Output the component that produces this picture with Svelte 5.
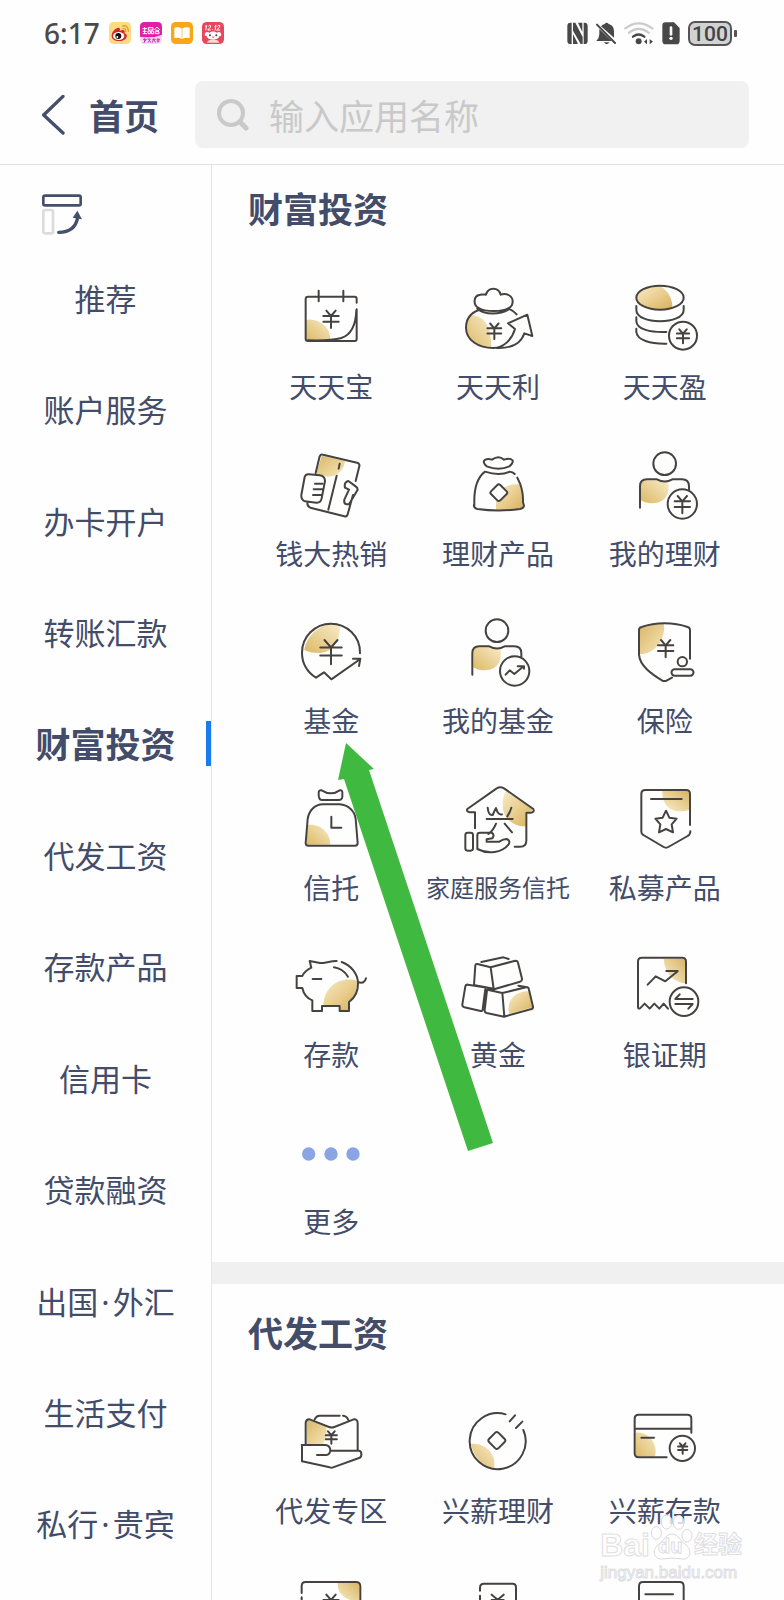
<script>
  const circle = (x, y, r) => `M${x - r} ${y}a${r} ${r} 0 1 0 ${2 * r} 0a${r} ${r} 0 1 0 ${-2 * r} 0`;
  const yen = (x, y, k) =>
    `M${x - 14 * k} ${y - 25 * k}L${x} ${y - 9 * k}L${x + 14 * k} ${y - 25 * k}` +
    `M${x - 23 * k} ${y - 9 * k}h${46 * k}M${x - 23 * k} ${y + 8 * k}h${46 * k}M${x} ${y - 9 * k}v${36 * k}`;

  const nav = ['推荐', '账户服务', '办卡开户', '转账汇款', '财富投资', '代发工资', '存款产品', '信用卡', '贷款融资', '出国·外汇', '生活支付', '私行·贵宾'];
  let active = $state('财富投资');
  let query = $state('');

  const wealth = [
    { label: '天天宝', at: '154 51', tone: 'bl',
      gold: 'M199 180Q215 176 235 184Q272 200 272 241L199 241z',
      line: 'M351 128V116Q351 110 345 110H205Q198 110 198 117V237Q198 243 205 243H345Q351 243 351 237V148M237 92V124M311 92V124M205 241Q275 243 305 234Q348 220 350 150' + yen(274, 177, 1) },
    { label: '天天利', at: '654 51', tone: 'bl',
      gold: 'M690 168C720 160 757 190 753 260C725 264 680 245 678 203C678 190 683 175 690 168z',
      line: 'M716 144C700 136 698 108 720 104C728 102 735 104 738 104C744 80 776 80 782 104C800 98 818 108 818 124C818 134 812 142 806 144C790 156 734 156 716 144M712 146C735 166 780 164 806 148M716 150C690 160 678 180 678 203C678 240 715 264 760 264C790 264 815 240 825 207L804 190L862 164L877 228L853 220C845 245 820 266 770 264M806 146Q820 152 830 163' + yen(763, 213, 0.9) },
    { label: '天天盈', at: '254 51', tone: 'br',
      gold: 'M290 113C290 90 330 78 360 79C385 93 397 120 396 143C370 152 290 150 290 113z',
      line: 'M288 113a71 36 0 1 0 142 0a71 36 0 1 0 -142 0M288 138V150C288 195 430 195 430 150V138M288 172V184C290 208 330 218 378 216M288 206V216C290 240 330 252 378 251' + circle(428, 227, 42) + yen(428, 228, 0.8) },
    { label: '钱大热销', at: '154 553', tone: 'tl',
      gold: 'M246 588L316 604C312 640 280 655 256 650L230 642z',
      line: 'M228 640L240 590Q243 583 250 585L352 609Q361 612 359 620L348 664M340 706L324 764Q322 772 314 770L212 744Q203 741 203 730M195 652Q198 643 208 644L240 647Q256 650 256 664L246 716Q243 730 230 729L196 725Q184 720 185 706zM226 672H248M222 689H248M220 706H246M291 648L266 750M300 612L297 627M326 664Q312 668 316 684L328 690L314 720Q312 732 320 734H328L354 690Q354 684 348 680L326 664' },
    { label: '理财产品', at: '654 553', tone: 'br',
      gold: 'M768 750V724H778L802 700L790 685Q805 672 838 674Q850 705 848 745Q810 754 768 750z',
      line: 'M740 620Q725 606 736 600Q744 596 756 600Q776 586 792 600Q810 594 818 602Q820 612 808 620Q776 634 740 620M703 738V730C702 690 710 655 735 636C750 641 760 643 776 643C790 643 800 640 810 636Q818 636 824 643M832 654C846 680 850 705 849 728L852 738Q850 746 840 748Q776 757 712 748Q698 744 703 732M772 676Q776 672 781 676L800 695Q804 699 800 703L781 722Q776 726 772 722L753 703Q749 699 753 695z' },
    { label: '我的理财', at: '254 553', tone: 'bl',
      gold: 'M302 722V680Q302 662 320 662H350Q365 668 384 668Q386 690 382 702Q370 730 335 731Q315 731 302 722z',
      line: circle(373, 612, 34) + 'M299 744V680Q299 659 320 659H350Q373 672 396 659H425Q446 659 446 680V690' + circle(426, 733, 44) + yen(426, 734, 1) },
    { label: '基金', at: '154 65', tone: 'bl',
      gold: 'M194 182C200 140 240 105 276 105L300 110C303 150 280 190 240 191C220 191 205 188 194 182z',
      line: 'M361 192C363 140 320 103 274 103C225 103 187 143 187 190C187 222 203 248 229 265L253 249L275 270L362 209M340 208H362L358 230' + yen(274, 187, 1.4) },
    { label: '我的基金', at: '654 65', tone: 'bl',
      gold: 'M700 234V192Q700 174 718 174H748Q763 180 782 180Q784 202 780 214Q768 242 733 243Q713 243 700 234z',
      line: circle(771, 124, 34) + 'M697 256V192Q697 171 718 171H748Q771 184 794 171H823Q844 171 844 192V202' + circle(824, 245, 44) + 'M797 256L809 243L823 254L851 231M833 231H852V238' },
    { label: '保险', at: '254 65', tone: 'tl',
      gold: 'M299 194V122Q299 117 304 116Q335 104 371 103C376 150 345 194 299 194z',
      line: 'M449 208V122Q449 115 442 113C400 98 345 98 304 113Q296 115 296 122V195C298 230 335 255 366 274Q373 277 380 273L395 265' + yen(376, 177, 1) + circle(426, 217, 14) + 'M403 240H450a9 9 0 0 1 0 19H403a9 9 0 0 1 0 -19' },
    { label: '信托', at: '154 567', tone: 'bl',
      gold: 'M203 708C240 702 272 730 272 767L201 767z',
      line: 'M237 612Q237 602 246 604Q274 622 300 604Q310 602 308 616Q310 632 298 633H246Q236 632 237 612M198 762L204 690C208 665 225 646 250 646H300C325 648 345 665 348 690L354 762Q354 770 346 770H206Q198 770 198 762M275 683V716H305' },
    { label: '家庭服务信托', small: true, at: '654 567', tone: 'br',
      gold: 'M800 606L878 660L872 668H856V712C810 712 785 680 788 640Q790 615 800 606z',
      line: 'M705 718V670H690Q678 668 682 660L770 598Q781 592 792 598L880 660Q884 670 872 671H859V755Q859 773 840 773H824M743 656Q745 680 758 678Q764 664 768 657Q774 680 786 676M814 656Q810 670 802 682M740 690H818M768 704Q760 725 745 735M794 704L816 730M676 738Q676 731 683 731H692Q699 731 699 738V778Q699 785 692 785H683Q676 785 676 778zM712 738Q712 731 720 731H755Q765 738 757 748L740 751V758H778Q790 750 800 750Q812 755 806 766C785 792 745 797 712 780z' },
    { label: '私募产品', at: '254 567', tone: 'tr',
      gold: 'M366 606H437Q446 606 446 615V662C410 675 365 665 366 606z',
      line: 'M449 708V615Q449 603 437 603H315Q303 603 303 615V728Q303 735 309 738L370 774Q377 778 384 774L442 741Q450 737 450 727M332 630H424M377 665L387 686L409 689L394 706L398 730L377 720L356 730L360 706L345 689L367 686z' },
    { label: '存款', at: '154 77', tone: 'br',
      gold: 'M352 184C300 170 255 200 251 257H302V272H326V246Q354 225 352 184z',
      line: 'M291 125C270 125 255 132 241 131L210 125L215 145C200 153 192 160 188 170H171V206H188C192 225 205 238 218 243V275H247V260H300V275H328V248C345 235 356 215 355 190C354 165 335 138 306 128M355 188Q375 195 379 177M219 179H245M283 144Q310 148 325 172' },
    { label: '黄金', at: '654 77', tone: 'br',
      gold: 'M866 216L877 264L808 284C798 250 820 215 866 216z',
      line: 'M712 134L752 144L826 124Q833 124 834 130L846 178Q847 185 840 187L762 210L702 197L706 138Q707 133 712 134M752 144L761 209M724 128L790 114L806 119M733 204L684 196Q678 195 676 201L667 255Q666 262 673 264L722 275Q728 276 728 270L736 209M742 211L787 221L858 204Q866 203 867 211L879 262Q880 268 872 270L792 292L740 281Q733 279 734 272L741 213M787 221L793 292M835 199L862 204M705 198L765 209' },
    { label: '银证期', at: '254 77', tone: 'tr',
      gold: 'M370 118H425Q434 118 434 127V192Q418 190 398 178Q372 155 370 118z',
      line: 'M437 192V127Q437 115 425 115H304Q293 115 293 127V262Q293 270 299 267L313 253L328 268L342 253L357 268L370 253L383 268M322 196L346 171L375 186L412 156M378 155H412' + circle(431, 247, 43) + 'M457 239H405L418 225M405 254H457L444 268' },
    { label: '更多', at: '154 577', dots: circle(207, 703, 20) + circle(274, 703, 20) + circle(340, 703, 20) }
  ];

  const salary = [
    { label: '代发专区', at: '274 423', tone: 'tl',
      gold: 'M321 553V490Q322 480 330 481L380 500Q385 525 370 553z',
      line: 'M318 553V488Q320 477 330 478L388 501Q396 504 404 501L462 478Q474 477 474 490V570M345 478Q350 467 360 467H420M430 467Q442 468 446 480M306 555H378Q392 557 392 572Q390 584 380 585H352M394 572H478Q486 573 485 584Q485 592 478 594L400 622Q396 624 390 622L307 604V555' + yen(395, 532, 0.72) },
    { label: '兴薪理财', at: '774 423', tone: 'bl',
      gold: 'M812 552C850 545 892 580 882 624Q830 615 812 552z',
      line: 'M917 463A84 84 0 1 0 970 510M945 466L929 484M967 485L948 504M886 518Q890 514 895 518L914 537Q918 541 914 546L895 565Q890 569 886 565L867 546Q863 541 867 537z' },
    { label: '兴薪存款', at: '254 123', tone: 'bl',
      gold: 'M286 218C330 212 355 260 343 290H295Q286 290 286 280z',
      line: 'M453 218V176Q453 164 441 164H295Q283 164 283 176V280Q283 292 295 292H379M283 206H453M303 233H341' + circle(426, 265, 38) + yen(427, 265, 0.6) },
    { at: '274 925', tone: 'tr',
      gold: 'M414 970H468Q479 970 479 980V1030C440 1020 412 1005 414 970z',
      line: 'M306 1000V980Q306 967 318 967H468Q482 967 482 980V1090H306V1013' + yen(394, 1030, 1) },
    { at: '774 925', tone: 'br',
      gold: 'M900 1060H945V1090H890z',
      line: 'M840 993V984Q840 972 852 972H938Q948 972 948 984V1090H840V1008M875 1005L893 1020L911 1005M875 1021H911' },
    { at: '254 625', tone: 'br',
      gold: 'M390 740H427V790H380z',
      line: 'M296 790V680Q296 667 308 667H418Q430 667 430 680V790M315 704H398' }
  ];
</script>

{#snippet apps(items)}
  <div class="grid">
    {#each items as item}
      <button class="app" type="button">
        <svg class="pic" viewBox="{item.at} 240 240" aria-hidden="true">
          {#if item.dots}
            <path d={item.dots} fill="#89a5e4" />
          {:else}
            <path d={item.gold} fill="url(#gold-{item.tone})" />
            <path d={item.line} class="ink" />
          {/if}
        </svg>
        {#if item.label}<span class="name" class:small={item.small}>{item.label}</span>{/if}
      </button>
    {/each}
  </div>
{/snippet}

<div class="page">
  <svg class="defs" width="0" height="0" aria-hidden="true">
    <defs>
      <linearGradient id="gold-bl" x1="0" y1="1" x2="1" y2="0"><stop stop-color="#dcb965" /><stop offset="1" stop-color="#f8ebc8" /></linearGradient>
      <linearGradient id="gold-tl" x1="0" y1="0" x2="1" y2="1"><stop stop-color="#d9b668" /><stop offset="1" stop-color="#f8e7b8" /></linearGradient>
      <linearGradient id="gold-tr" x1="1" y1="0" x2="0" y2="1"><stop stop-color="#d8b568" /><stop offset="1" stop-color="#fbefcb" /></linearGradient>
      <linearGradient id="gold-br" x1="1" y1="1" x2="0" y2="0"><stop stop-color="#d9b25c" /><stop offset="1" stop-color="#f9ebc6" /></linearGradient>
    </defs>
  </svg>

  <div class="status">
    <div class="group left">
      <span class="time">6:17</span>
      <svg width="22" height="22" viewBox="0 0 66 66">
        <rect width="66" height="66" rx="14" fill="#fbdc83" />
        <path d="M8 42C8 27 25 14 31 18Q35 21 32 27Q44 20 47 28Q48 31 46 34Q55 37 53 44C49 62 8 62 8 42z" fill="#d8242c" />
        <ellipse cx="29" cy="42" rx="17" ry="12" fill="#fff" /><circle cx="28" cy="42" r="9" fill="#111" /><circle cx="25" cy="45" r="3" fill="#fff" />
        <path d="M41 12Q58 8 58 28M42 20Q51 18 50 28" fill="none" stroke="#e99b27" stroke-width="4" stroke-linecap="round" />
      </svg>
      <svg width="22" height="22" viewBox="0 0 66 66">
        <rect width="66" height="66" rx="14" fill="#f8d9ef" />
        <path d="M0 44V14Q0 0 14 0H52Q66 0 66 14V38Q40 50 0 44z" fill="#e01fa4" />
        <path d="M7 20H21M14 15V35M8 28H20M8 35H21M25 17H39V24H25zM24 27H31V35H24zM34 27H41V35H34zM51 15L43 24M51 15L60 24M46 25H57M46 29H57V35H46z" stroke="#fff" stroke-width="3" fill="none" />
        <path d="M9 52H19L11 62M14 49V62M22 51H31L24 62M26 52L33 62M37 52H47M42 49L37 62M42 54L47 62M50 52H60M50 57H59M54 49V62" stroke="#b93abb" stroke-width="3" fill="none" />
      </svg>
      <svg width="22" height="22" viewBox="0 0 66 66">
        <rect width="66" height="66" rx="14" fill="#f9a716" />
        <path d="M10 17Q23 14 33 20Q43 14 56 17V48Q43 45 33 51Q23 45 10 48z" fill="#fff" /><path d="M33 20V50" stroke="#efcf94" stroke-width="3" />
      </svg>
      <svg width="22" height="22" viewBox="0 0 66 66">
        <rect width="66" height="66" rx="14" fill="#e9475d" />
        <path d="M10 13L14 10L11 25M19 13Q22 8 26 11Q28 15 17 24H26M31 22V24M38 13L42 10L39 25M46 13Q49 8 54 11Q55 15 44 24H54" fill="none" stroke="#fff" stroke-width="3" />
        <path d="M8 36Q12 26 22 32Q33 25 45 32Q55 27 58 37Q59 43 52 43Q49 53 33 53Q17 53 14 43Q7 42 8 36z" fill="#fff" /><path d="M14 62Q20 50 33 54Q47 50 52 62z" fill="#ffd8d3" />
        <circle cx="24" cy="40" r="3" fill="#503038" /><circle cx="43" cy="40" r="3" fill="#503038" /><path d="M30 44Q33 49 37 44" fill="none" stroke="#e9475d" stroke-width="3" />
      </svg>
    </div>
    <div class="group right">
      <svg width="21" height="25" viewBox="528 62 63 75" fill="#484848">
        <path d="M542 67V131H538Q529 131 529 121V77Q529 67 538 67zM546 67H553L575 110V131H569L546 91zM546 102L560 128V131H546zM578 67H581Q590 67 590 77V121Q590 131 581 131H578zM561 67H574V95z" />
      </svg>
      <svg width="20" height="25" viewBox="614 62 60 75" fill="#484848">
        <path d="M629 78Q634 72 640 71Q646 63 652 71Q668 75 668 92V112zM624 86L661 122H615Q624 112 624 102zM637 126H655Q646 137 637 126z" /><path d="M617 73L671 128" stroke="#484848" stroke-width="6" stroke-linecap="round" />
      </svg>
      <svg width="30" height="25" viewBox="698 62 90 75" fill="none" stroke-width="7" stroke-linecap="round">
        <path d="M702 84Q742 54 783 84M713 97Q742 74 772 97" stroke="#cbcbcb" /><path d="M725 109Q742 96 759 109" stroke="#484848" /><circle cx="742" cy="123" r="9" fill="#484848" /><path d="M767 116V132L758 124zM775 116V132L785 124z" fill="#484848" />
      </svg>
      <svg width="18" height="25" viewBox="810 62 54 75">
        <path d="M820 66H846L863 83V121Q863 132 853 132H821Q811 132 811 121V76Q811 66 820 66z" fill="#484848" /><path d="M837 82V102" stroke="#fff" stroke-width="8" stroke-linecap="round" /><circle cx="837" cy="114" r="5" fill="#fff" />
      </svg>
      <div class="battery"><span class="level">100</span><span class="nub"></span></div>
    </div>
  </div>

  <header>
    <a class="back" href="#home">
      <svg width="24" height="40" viewBox="126 285 72 120" aria-hidden="true"><path d="M189 289L131 345L189 399" fill="none" stroke="#454e6b" stroke-width="10" stroke-linecap="round" stroke-linejoin="round" /></svg>
      <span>首页</span>
    </a>
    <label class="search">
      <svg width="32" height="32" viewBox="0 0 32 32" aria-hidden="true"><circle cx="14" cy="14" r="12" fill="none" stroke="#c9c9c9" stroke-width="4" /><path d="M23 23L29 29" stroke="#c9c9c9" stroke-width="5" stroke-linecap="round" /></svg>
      <input type="search" placeholder="输入应用名称" bind:value={query} />
    </label>
  </header>

  <div class="body">
    <nav>
      <button class="switch" type="button">
        <svg width="40" height="41" viewBox="126 582 120 123" fill="none" stroke-width="8" aria-hidden="true">
          <rect x="130" y="587" width="112" height="29" rx="5" stroke="#454e6b" /><rect x="130" y="630" width="29" height="70" rx="5" stroke="#dcdcdc" />
          <path d="M176 697Q226 697 233 652" stroke="#454e6b" stroke-width="10" stroke-linecap="round" /><path d="M232 632L246 658L218 653z" fill="#454e6b" stroke="none" />
        </svg>
      </button>
      <div class="items">
        {#each nav as item}
          <button type="button" class="item" class:active={item === active} onclick={() => (active = item)}>
            {#each item.split('·') as part, i}{#if i}<span class="dot">·</span>{/if}{part}{/each}
          </button>
        {/each}
      </div>
    </nav>

    <main>
      <section>
        <h2>财富投资</h2>
        {@render apps(wealth)}
        <svg class="pointer" width="157" height="410" viewBox="337 742 157 410" aria-hidden="true"><path d="M346 743L374 769L369 770L493 1143L468 1151L344 779L338 780z" fill="#40b940" /></svg>
      </section>
      <div class="divider"></div>
      <section>
        <h2>代发工资</h2>
        {@render apps(salary)}
      </section>
    </main>
  </div>

  <div class="mark">
    <div class="brand">
      <span>Bai</span>
      <span class="paw">
        <svg width="44" height="48" viewBox="0 0 132 144" fill="#fff" fill-opacity="0.8" stroke="#d9d9de" stroke-width="3" aria-hidden="true">
          <ellipse cx="19" cy="60" rx="15" ry="19" /><ellipse cx="50" cy="27" rx="16" ry="21" /><ellipse cx="86" cy="28" rx="16" ry="21" /><ellipse cx="111" cy="68" rx="15" ry="19" />
          <path d="M66 63C84 63 91 84 108 96C130 116 118 140 98 138Q66 132 36 138C12 140 4 112 24 96C41 84 48 63 66 63z" />
        </svg>
        <span class="du">du</span>
      </span>
      <span class="cn">经验</span>
    </div>
    <div class="site">jingyan.baidu.com</div>
  </div>
</div>

<style>
  :global(body) { margin: 0; background: #fff; }
  .page { position: relative; display: flex; flex-direction: column; height: 100vh; overflow: hidden; background: #fefefe; color: #434c69; font-family: "Noto Sans CJK SC", "Noto Sans", sans-serif; }
  .defs { position: absolute; }
  svg { display: block; flex: none; }
  button { padding: 0; border: 0; background: none; color: inherit; font: inherit; cursor: pointer; }

  .status { display: flex; justify-content: space-between; align-items: center; height: 65px; padding: 0 47px 0 44px; flex: none; }
  .group { display: flex; align-items: center; }
  .left { gap: 9px; }
  .right { gap: 8px; padding-top: 2px; }
  .time { font: 500 28px/32px "Noto Sans", sans-serif; color: #4a4a4a; }
  .battery { display: flex; align-items: center; gap: 2px; }
  .level { box-sizing: border-box; width: 44px; height: 25px; border: 2px solid #555; border-radius: 7px; background: #d2d2d2; color: #424242; font: 500 21px/22px Roboto, sans-serif; text-align: center; }
  .nub { width: 3px; height: 7px; border-radius: 1px; background: #555; }

  header { display: flex; align-items: center; gap: 36px; padding: 16px 35px 16px 42px; border-bottom: 1px solid #e2e2e4; flex: none; }
  .back { display: flex; align-items: center; gap: 23px; color: inherit; text-decoration: none; font-size: 35px; line-height: 48px; font-weight: 700; white-space: nowrap; }
  .search { display: flex; align-items: center; gap: 20px; flex: 1; min-width: 0; height: 67px; padding: 0 22px; box-sizing: border-box; border-radius: 8px; background: #f1f1f1; }
  input { flex: 1; min-width: 0; padding: 0; border: 0; outline: 0; background: none; color: inherit; font: 400 35px/48px "Noto Sans CJK SC", sans-serif; }
  input::placeholder { color: #c9c9c9; opacity: 1; }

  .body { display: flex; flex: 1; min-height: 0; }
  nav { box-sizing: border-box; display: flex; flex-direction: column; width: 212px; flex: none; padding-bottom: 21px; border-right: 1px solid #e6e6e8; overflow: auto; scrollbar-width: none; }
  .switch { display: flex; padding: 29px 42px 7px; flex: none; }
  .items { display: flex; flex-direction: column; flex: 1; }
  .item { position: relative; flex: 1 0 60px; font-size: 31px; line-height: 44px; white-space: nowrap; }
  .item.active { font-size: 35px; font-weight: 700; }
  .item.active::after { content: ""; position: absolute; right: 0; top: calc(50% - 22px); width: 5px; height: 45px; background: #1a7bea; }
  .dot { margin: 0 3px; font-family: "Noto Sans", sans-serif; line-height: 1; }

  main { flex: 1; min-width: 0; overflow: hidden auto; scrollbar-width: none; }
  section { position: relative; padding: 18px 36px 20px; }
  h2 { margin: 0 0 44px; font-size: 35px; line-height: 50px; font-weight: 700; }
  .grid { display: grid; grid-template-columns: repeat(3, minmax(0, 1fr)); row-gap: 37px; }
  .app { display: flex; flex-direction: column; align-items: center; gap: 8px; }
  .pic { width: 80px; height: 80px; }
  .ink { fill: none; stroke: #454240; stroke-width: 6; stroke-linecap: round; stroke-linejoin: round; }
  .name { font-size: 28px; line-height: 42px; white-space: nowrap; }
  .name.small { font-size: 24px; }
  .divider { height: 22px; margin-bottom: 5px; background: #f0f0f0; }
  .pointer { position: absolute; left: 125px; top: 577px; pointer-events: none; }

  .mark { position: absolute; right: 42px; bottom: 15px; color: #fff; pointer-events: none; font-family: "Liberation Sans", sans-serif; -webkit-text-stroke: 1px #dedee2; }
  .brand { display: flex; align-items: flex-end; height: 48px; font-size: 32px; line-height: 32px; font-weight: 700; }
  .paw { position: relative; }
  .du { position: absolute; left: 8px; bottom: 3px; font-size: 20px; line-height: 24px; }
  .cn { font: 700 24px/36px "Noto Sans CJK SC", sans-serif; }
  .site { font-size: 17px; line-height: 24px; }
</style>
